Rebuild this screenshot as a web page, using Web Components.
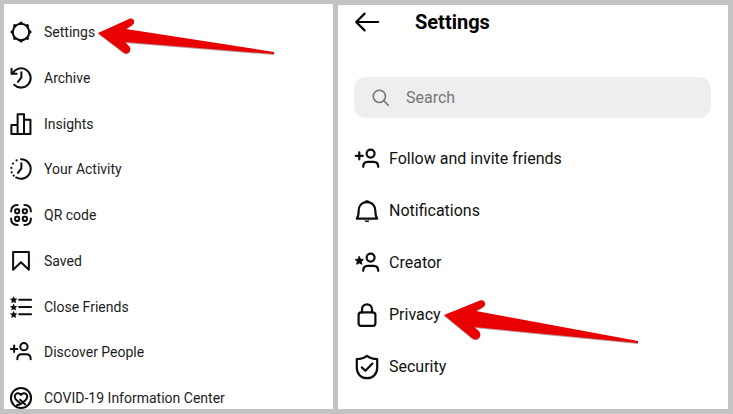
<!DOCTYPE html>
<html lang="en">
<head>
<meta charset="utf-8">
<meta name="viewport" content="width=device-width, initial-scale=1">
<title>Settings</title>
<style>
  body {
    margin: 0;
    background: #c3c3c3;
    color: #1c1c1c;
    font-family: Roboto, "Liberation Sans", sans-serif;
  }
</style>
</head>
<body>
<settings-layout>
  <side-menu slot="menu">
    <menu-item icon="gear" href="#settings">Settings<pointer-arrow slot="pointer"></pointer-arrow></menu-item>
    <menu-item icon="archive" href="#archive">Archive</menu-item>
    <menu-item icon="insights" href="#insights">Insights</menu-item>
    <menu-item icon="activity" href="#activity">Your Activity</menu-item>
    <menu-item icon="qr" href="#qr">QR code</menu-item>
    <menu-item icon="saved" href="#saved">Saved</menu-item>
    <menu-item icon="list" href="#friends">Close Friends</menu-item>
    <menu-item icon="discover" href="#discover">Discover People</menu-item>
    <menu-item icon="covid" href="#covid">COVID-19 Information Center</menu-item>
  </side-menu>
  <settings-page slot="page">
    <span slot="title">Settings</span>
    <menu-item icon="follow" href="#follow">Follow and invite friends</menu-item>
    <menu-item icon="bell" href="#notifications">Notifications</menu-item>
    <menu-item icon="creator" href="#creator">Creator</menu-item>
    <menu-item icon="lock" href="#privacy">Privacy<pointer-arrow slot="pointer" size="large"></pointer-arrow></menu-item>
    <menu-item icon="shield" href="#security">Security</menu-item>
  </settings-page>
</settings-layout>

<script>
const STAR = 'l1.2 2.6 2.9.3-2.1 2 .6 2.8-2.6-1.4-2.6 1.4.6-2.8-2.1-2 2.9-.3z';

const ICONS = {
  gear: `
    <circle cx="12" cy="12" r="9"/>
    <g fill="currentColor" stroke="none">
      <circle cx="12" cy="2.3" r="1.8"/><circle cx="18.9" cy="5.1" r="1.8"/>
      <circle cx="21.7" cy="12" r="1.8"/><circle cx="18.9" cy="18.9" r="1.8"/>
      <circle cx="12" cy="21.7" r="1.8"/><circle cx="5.1" cy="18.9" r="1.8"/>
      <circle cx="2.3" cy="12" r="1.8"/><circle cx="5.1" cy="5.1" r="1.8"/>
    </g>`,
  archive: `
    <path d="M2.8 7A10.5 10.5 0 1 1 4.6 19.4"/>
    <path d="M1.7 2v5.3h5.6M12.4 5.6v5.8L8.8 16.2"/>`,
  insights: `
    <path d="M1.5 13h6.8v9.8H1.5zM8.3 1.4h7v21.4h-7zM15.3 7.4h7v15.4h-7z"/>`,
  activity: `
    <path d="M12 1.4a10.6 10.6 0 1 1-5.3 19.8M12.4 5.6v5.8L8.8 16.2"/>
    <g fill="currentColor" stroke="none">
      <circle cx="7.2" cy="2.6" r="1.2"/><circle cx="3.3" cy="6.1" r="1.2"/>
      <circle cx="1.5" cy="10.8" r="1.2"/><circle cx="1.9" cy="15.6" r="1.2"/>
      <circle cx="4" cy="19.2" r="1.2"/>
    </g>`,
  qr: `
    <path d="M1.2 8.3C1.2 3.4 3.4 1.2 8.3 1.2M15.7 1.2c4.9 0 7.1 2.2 7.1 7.1M22.8 15.7c0 4.9-2.2 7.1-7.1 7.1M8.3 22.8c-4.9 0-7.1-2.2-7.1-7.1"/>
    <rect x="5.6" y="5.6" width="4.4" height="4.4" rx="1.2"/>
    <rect x="14" y="5.6" width="4.4" height="4.4" rx="1.2"/>
    <rect x="5.6" y="14" width="4.4" height="4.4" rx="1.2"/>
    <rect x="14" y="14" width="4.4" height="4.4" rx="1.2"/>`,
  saved: `<path d="M3.4 2.2h17.2v19.4L12 13.4l-8.600 8.200z"/>`,
  list: `
    <path d="M10 4h13M10 12h13M10 20h13"/>
    <path fill="currentColor" stroke="none" d="M4 .2${STAR}M4 8.2${STAR}M4 16.2${STAR}"/>`,
  discover: `
    <circle cx="15.2" cy="6.2" r="4"/>
    <path d="M1 8.6h7M4.500 5v7M8 19.8c0-3.6 1.6-5.4 4.6-5.4h5.2c3 0 4.8 1.8 4.8 5.4"/>`,
  covid: `
    <circle cx="12" cy="12" r="11"/>
    <path d="M7.6 20c3.2-.6 6.2-2.4 9-5.2 2.8-2.8 2.7-5.6 1-7.2-1.7-1.5-4.2-1-5.6 1-1.4-2-3.9-2.5-5.6-1-1.7 1.6-1.8 4.2.8 6.8l3.2 2.8M11 14l5.6 5"/>`,
  follow: `
    <circle cx="15.6" cy="6.6" r="4"/>
    <path d="M.8 8.8h7M4.3 5.3v7M8.2 19.8c0-3.4 1.5-5 4.4-5h6.2c2.9 0 4.4 1.6 4.4 5"/>`,
  bell: `
    <path d="M1.8 19.6h20.4c-1.6-2-1.8-3.8-1.8-7.4 0-5.200-3-9-8.4-9s-8.4 3.800-8.4 9c0 3.600-.2 5.400-1.8 7.4z"/>
    <path fill="currentColor" stroke="none" d="M9.2 2.9C9.8.6 14.2.6 14.8 2.9zM9.4 21.4h5.2c-.6 2.200-4.600 2.200-5.2 0z"/>`,
  creator: `
    <circle cx="15.6" cy="6.6" r="4"/>
    <path d="M8.2 19.8c0-3.4 1.5-5 4.4-5h6.2c2.9 0 4.4 1.6 4.4 5"/>
    <path fill="currentColor" d="M4.3 5.6${STAR}" stroke-width="1"/>`,
  lock: `
    <rect x="3.6" y="9.4" width="16.8" height="13.4" rx="2.6"/>
    <path d="M7 9.4V6.6c0-7 10-7 10 0v2.8"/>`,
  shield: `
    <path d="M12 .8c3 2.4 6.4 3.2 10.2 3.2v8.4c0 6.4-4 10.8-10.2 10.8S1.8 18.8 1.8 12.4V4C5.6 4 9 3.2 12 .8z"/>
    <path d="M6.8 12.4l3.6 3.4 7-7.2"/>`,
  back: `<path d="M23.2 12H1.4M9.6 3.6L1.2 12l8.4 8.4"/>`,
  search: `<circle cx="10.4" cy="10.4" r="8.6"/><path d="M16.6 16.6l6.4 6.4"/>`
};

class SvgIcon extends HTMLElement {
  connectedCallback() {
    this.attachShadow({ mode: 'open' });
    this.shadowRoot.innerHTML = `
      <style>
        :host {
          display: block;
          flex: none;
          width: var(--icon-size, 24px);
          height: var(--icon-size, 24px);
        }
        svg {
          display: block;
          width: 100%;
          height: 100%;
          fill: none;
          stroke: currentColor;
          stroke-width: 2.2;
          stroke-linecap: round;
          stroke-linejoin: round;
          overflow: visible;
        }
      </style>
      <svg viewBox="0 0 24 24" aria-hidden="true">${ICONS[this.getAttribute('name')] || ''}</svg>
    `;
  }
}

class PointerArrow extends HTMLElement {
  connectedCallback() {
    const large = this.getAttribute('size') === 'large';
    const width = large ? 196 : 178;
    const height = large ? 42 : 38;
    const shape = large
      ? 'M0 15L36 .4C41-1 43 5 39 7L32 11 194 41V43L30 27l5 4c4 5-2 11-7 7z'
      : 'M0 15L31 1C36-1 38 5 34 7L28 11 176 34V36L27 24l4 4c4 5-2 10-6 6z';
    this.attachShadow({ mode: 'open' });
    this.shadowRoot.innerHTML = `
      <style>
        :host {
          display: block;
          pointer-events: none;
        }
        svg {
          display: block;
          overflow: visible;
          filter: drop-shadow(0 1px 0 rgba(70, 0, 0, 0.4));
        }
      </style>
      <svg width="${width}" height="${height}" viewBox="0 0 ${width} ${height}" aria-hidden="true">
        <path fill="#e90000" d="${shape}"/>
      </svg>
    `;
  }
}

class MenuItem extends HTMLElement {
  connectedCallback() {
    this.attachShadow({ mode: 'open' });
    this.shadowRoot.innerHTML = `
      <style>
        :host {
          display: block;
        }
        a {
          display: flex;
          align-items: center;
          gap: var(--item-gap, 12px);
          height: var(--item-height, 22px);
          color: inherit;
          text-decoration: none;
          white-space: nowrap;
        }
        svg-icon {
          color: #0c0c0c;
        }
        .label {
          position: relative;
        }
        /* the arrow lies over the row, just past its label */
        .pointer {
          position: absolute;
          left: 100%;
          top: -3px;
          margin-left: 3px;
        }
      </style>
      <a href="${this.getAttribute('href')}">
        <svg-icon name="${this.getAttribute('icon')}"></svg-icon>
        <span class="label"><slot></slot><span class="pointer"><slot name="pointer"></slot></span></span>
      </a>
    `;
  }
}

class SideMenu extends HTMLElement {
  connectedCallback() {
    this.attachShadow({ mode: 'open' });
    this.shadowRoot.innerHTML = `
      <style>
        :host {
          --icon-size: 22px;
          display: block;
          background: #fff;
          font-size: 14px;
          line-height: 22px;
        }
        nav {
          box-sizing: border-box;
          height: 100%;
          padding: 17px 6px 0;
          display: flex;
          flex-direction: column;
          justify-content: space-between;
          gap: 16px;
        }
      </style>
      <nav aria-label="Menu"><slot></slot></nav>
    `;
  }
}

class SearchBox extends HTMLElement {
  connectedCallback() {
    this.attachShadow({ mode: 'open' });
    this.shadowRoot.innerHTML = `
      <style>
        :host {
          --icon-size: 17px;
          display: block;
        }
        label {
          display: flex;
          align-items: center;
          gap: 17px;
          height: 41px;
          padding: 0 18px;
          border-radius: 12px;
          background: #eee;
          color: #737373;
        }
        input {
          flex: 1;
          min-width: 0;
          padding: 0;
          border: 0;
          outline: 0;
          background: none;
          font: inherit;
          color: #1c1c1c;
        }
        input::placeholder {
          color: #777;
          opacity: 1;
        }
      </style>
      <label>
        <svg-icon name="search"></svg-icon>
        <input type="search" placeholder="Search" aria-label="Search">
      </label>
    `;
  }
}

class SettingsPage extends HTMLElement {
  connectedCallback() {
    this.attachShadow({ mode: 'open' });
    this.shadowRoot.innerHTML = `
      <style>
        :host {
          --icon-size: 24px;
          --item-gap: 10px;
          --item-height: 52px;
          display: block;
          background: #fff;
          font-size: 16px;
          line-height: 24px;
          color: #111;
        }
        header {
          display: flex;
          align-items: center;
          gap: 36px;
          height: 34px;
          padding: 0 17px;
        }
        button {
          padding: 0;
          border: 0;
          background: none;
          color: #000;
          cursor: pointer;
        }
        h1 {
          margin: 0;
          font-size: 20px;
          font-weight: 700;
          color: #000;
        }
        search-box {
          margin: 38px 17px 15px 16px;
        }
        nav {
          padding: 0 17px 15px;
        }
      </style>
      <header>
        <button type="button" aria-label="Back"><svg-icon name="back"></svg-icon></button>
        <h1><slot name="title"></slot></h1>
      </header>
      <search-box></search-box>
      <nav aria-label="Settings"><slot></slot></nav>
    `;
  }
}

class SettingsLayout extends HTMLElement {
  connectedCallback() {
    this.attachShadow({ mode: 'open' });
    this.shadowRoot.innerHTML = `
      <style>
        :host {
          box-sizing: border-box;
          display: grid;
          grid-template-columns: 329fr 390fr;
          gap: 5px;
          min-height: 100vh;
          padding: 4px 5px 5px 4px;
        }
        ::slotted([slot="page"]) {
          margin-top: 1px;
        }
      </style>
      <slot name="menu"></slot>
      <slot name="page"></slot>
    `;
  }
}

customElements.define('svg-icon', SvgIcon);
customElements.define('pointer-arrow', PointerArrow);
customElements.define('menu-item', MenuItem);
customElements.define('side-menu', SideMenu);
customElements.define('search-box', SearchBox);
customElements.define('settings-page', SettingsPage);
customElements.define('settings-layout', SettingsLayout);
</script>
</body>
</html>
